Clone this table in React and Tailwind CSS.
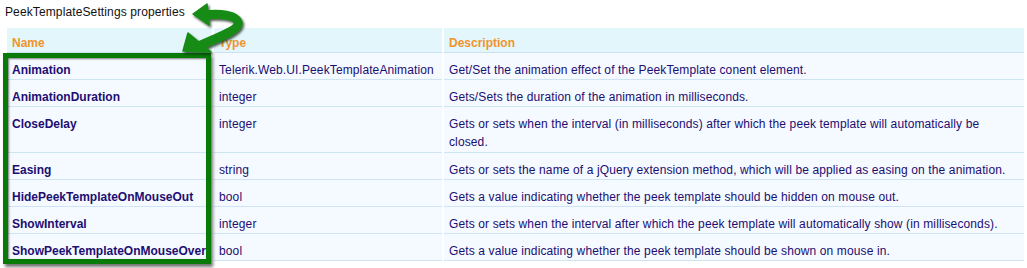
const rows = [
  {
    name: "Animation",
    type: "Telerik.Web.UI.PeekTemplateAnimation",
    desc: ["Get/Set the animation effect of the PeekTemplate conent element."],
  },
  {
    name: "AnimationDuration",
    type: "integer",
    desc: ["Gets/Sets the duration of the animation in milliseconds."],
  },
  {
    name: "CloseDelay",
    type: "integer",
    desc: [
      "Gets or sets when the interval (in milliseconds) after which the peek template will automatically be",
      "closed.",
    ],
  },
  {
    name: "Easing",
    type: "string",
    desc: [
      "Gets or sets the name of a jQuery extension method, which will be applied as easing on the animation.",
    ],
  },
  {
    name: "HidePeekTemplateOnMouseOut",
    type: "bool",
    desc: ["Gets a value indicating whether the peek template should be hidden on mouse out."],
  },
  {
    name: "ShowInterval",
    type: "integer",
    desc: [
      "Gets or sets when the interval after which the peek template will automatically show (in milliseconds).",
    ],
  },
  {
    name: "ShowPeekTemplateOnMouseOver",
    type: "bool",
    desc: ["Gets a value indicating whether the peek template should be shown on mouse in."],
  },
];

function Arrow() {
  return (
    <svg
      className="absolute left-0 top-0 pointer-events-none"
      width="260"
      height="60"
      viewBox="0 0 260 60"
    >
      <defs>
        <filter id="sh" x="-20%" y="-20%" width="140%" height="140%">
          <feDropShadow dx="1.5" dy="2" stdDeviation="1" floodColor="#0a2a0a" floodOpacity="0.75" />
        </filter>
      </defs>
      <g filter="url(#sh)" fill="#158c15" stroke="#158c15">
        <path
          d="M204 15 C220 13, 236 15, 238 22 C240 29, 222 36, 198 46"
          fill="none"
          strokeWidth="9"
          strokeLinejoin="round"
        />
        <polygon points="193,14 207,4 209,25" strokeWidth="1.5" strokeLinejoin="round" />
        <polygon points="183,51 188,33 211,52" strokeWidth="1.5" strokeLinejoin="round" />
      </g>
    </svg>
  );
}

export default function App() {
  return (
    <div className="relative w-[1027px] h-[268px] bg-white overflow-hidden font-['Liberation_Sans',Arial,sans-serif] text-[12px] tracking-[0.12px]">
      <div className="pl-[5px] pt-[3px] leading-[18px] text-[#111]">
        PeekTemplateSettings properties
      </div>

      <table className="ml-[5px] mt-[7px] border-separate border-spacing-x-0.5 border-spacing-y-0 table-fixed w-[1021px]">
        <thead>
          <tr className="bg-[#e2f6fb] text-[#f0942e] text-left tracking-normal">
            <th className="w-[205px] pl-[5px] pt-[6px] leading-[18px] border-b border-[#c9e2ef] font-bold">
              Name
            </th>
            <th className="w-[228px] pl-[5px] pt-[6px] leading-[18px] border-b border-[#c9e2ef] font-bold">
              Type
            </th>
            <th className="pl-[5px] pt-[6px] leading-[18px] border-b border-[#c9e2ef] font-bold">
              Description
            </th>
          </tr>
        </thead>
        <tbody className="text-[#220d72]">
          {rows.map((r) => (
            <tr key={r.name} className="bg-[#f4faff] align-top">
              <td className="pl-[5px] pt-[8px] leading-[18px] border-b border-[#cfe4f1] font-bold whitespace-nowrap tracking-normal">
                {r.name}
              </td>
              <td className="pl-[5px] pt-[8px] leading-[18px] border-b border-[#cfe4f1] whitespace-nowrap">
                {r.type}
              </td>
              <td
                className={
                  r.desc.length > 1
                    ? "pl-[5px] pt-[8px] pb-[1px] leading-[18px] border-b border-[#cfe4f1] whitespace-nowrap"
                    : "pl-[5px] pt-[8px] leading-[18px] border-b border-[#cfe4f1] whitespace-nowrap"
                }
              >
                {r.desc.map((line, i) => (
                  <div key={i}>{line}</div>
                ))}
              </td>
            </tr>
          ))}
        </tbody>
      </table>

      {/* highlight box around the Name column */}
      <div className="absolute left-[3px] top-[53px] w-[208px] h-[211px] border-[5px] border-[#087a08] shadow-[2px_3px_3px_rgba(0,0,0,0.55),inset_1px_1px_2px_rgba(0,0,0,0.5)] pointer-events-none" />

      <Arrow />
    </div>
  );
}
